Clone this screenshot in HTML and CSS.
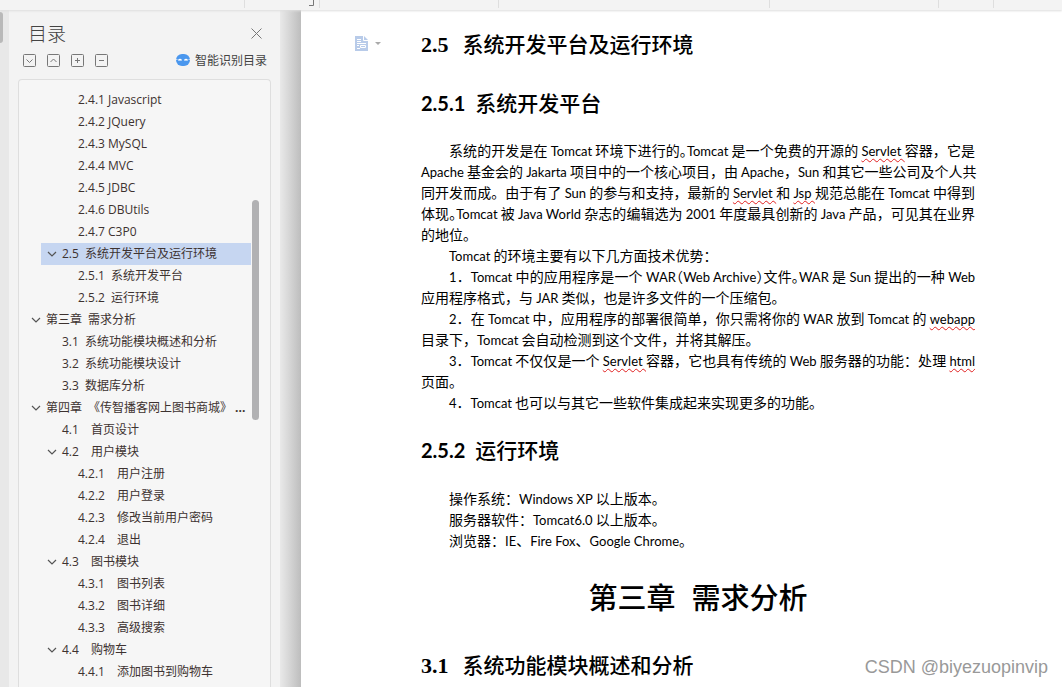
FILE: index.html
```html
<!DOCTYPE html>
<html lang="zh-CN">
<head>
<meta charset="utf-8">
<title>目录</title>
<link rel="stylesheet" href="styles.css">
</head>
<body>
<svg width="0" height="0" class="defs" aria-hidden="true">
  <symbol id="chev" viewBox="0 0 12 12"><path d="M2 4l4 4 4-4" fill="none" stroke="#555" stroke-width="1.2"/></symbol>
</svg>
<div class="app">
  <header class="topbar">
    <i class="t1"></i><i class="t2"></i><i class="t3"></i><i class="t4"></i><i class="t5"></i><i class="t6"></i>
    <svg class="corner" width="6" height="7" viewBox="0 0 6 7" aria-hidden="true"><path d="M0 5.5h4.500V0" fill="none" stroke="#777"/></svg>
  </header>
  <div class="work">
    <div class="rail"><div class="rail-thumb"></div></div>
    <aside class="panel">
      <div class="panel-head">
        <h2>目录</h2>
        <button class="icon" aria-label="关闭"><svg width="11" height="11" viewBox="0 0 11 11"><path d="M.5.5l10 10M10.500.5l-10 10" stroke="#777" fill="none"/></svg></button>
      </div>
      <div class="tools">
        <button class="icon" aria-label="展开"><svg width="13" height="13" viewBox="0 0 13 13"><g fill="none" stroke="#777"><rect x=".5" y=".5" width="12" height="12" rx="1"/><path d="M3.500 5.500l3 3 3-3"/></g></svg></button>
        <button class="icon" aria-label="收起"><svg width="13" height="13" viewBox="0 0 13 13"><g fill="none" stroke="#777"><rect x=".5" y=".5" width="12" height="12" rx="1"/><path d="M3.500 8l3-3 3 3"/></g></svg></button>
        <button class="icon" aria-label="升级"><svg width="13" height="13" viewBox="0 0 13 13"><g fill="none" stroke="#777"><rect x=".5" y=".5" width="12" height="12" rx="1"/><path d="M4 6.500h5M6.500 4v5"/></g></svg></button>
        <button class="icon" aria-label="降级"><svg width="13" height="13" viewBox="0 0 13 13"><g fill="none" stroke="#777"><rect x=".5" y=".5" width="12" height="12" rx="1"/><path d="M4 6.500h5"/></g></svg></button>
        <button class="smart"><svg width="14" height="12" viewBox="0 0 14 12" aria-hidden="true"><rect width="14" height="12" rx="6" fill="#4a97ee"/><path d="M0 5.500h1.500M12.500 5.500H14" stroke="#b9d6f8"/><path d="M2.500 6.500q1.500-2 3 0M8.500 6.500q1.500-2 3 0" fill="none" stroke="#fff" stroke-width="1.300"/></svg>智能识别目录</button>
      </div>
      <nav class="tree">
        <ul>
          <li class="l3"><a href="#">2.4.1 Javascript</a></li>
          <li class="l3"><a href="#">2.4.2 JQuery</a></li>
          <li class="l3"><a href="#">2.4.3 MySQL</a></li>
          <li class="l3"><a href="#">2.4.4 MVC</a></li>
          <li class="l3"><a href="#">2.4.5 JDBC</a></li>
          <li class="l3"><a href="#">2.4.6 DBUtils</a></li>
          <li class="l3"><a href="#">2.4.7 C3P0</a></li>
          <li class="l2 on"><button class="icon" aria-label="折叠"><svg><use href="#chev"/></svg></button><a href="#">2.5<s class="g2"></s>系统开发平台及运行环境</a></li>
          <li class="l3"><a href="#">2.5.1<s class="g2"></s>系统开发平台</a></li>
          <li class="l3"><a href="#">2.5.2<s class="g2"></s>运行环境</a></li>
          <li class="l1"><button class="icon" aria-label="折叠"><svg><use href="#chev"/></svg></button><a href="#">第三章<s class="g2"></s>需求分析</a></li>
          <li class="l2"><a href="#">3.1<s class="g2"></s>系统功能模块概述和分析</a></li>
          <li class="l2"><a href="#">3.2<s class="g2"></s>系统功能模块设计</a></li>
          <li class="l2"><a href="#">3.3<s class="g2"></s>数据库分析</a></li>
          <li class="l1"><button class="icon" aria-label="折叠"><svg><use href="#chev"/></svg></button><a href="#">第四章<s class="g2"></s>《传智播客网上图书商城》<b>...</b></a></li>
          <li class="l2"><a href="#">4.1<s class="g4"></s>首页设计</a></li>
          <li class="l2"><button class="icon" aria-label="折叠"><svg><use href="#chev"/></svg></button><a href="#">4.2<s class="g4"></s>用户模块</a></li>
          <li class="l3"><a href="#">4.2.1<s class="g4"></s>用户注册</a></li>
          <li class="l3"><a href="#">4.2.2<s class="g4"></s>用户登录</a></li>
          <li class="l3"><a href="#">4.2.3<s class="g4"></s>修改当前用户密码</a></li>
          <li class="l3"><a href="#">4.2.4<s class="g4"></s>退出</a></li>
          <li class="l2"><button class="icon" aria-label="折叠"><svg><use href="#chev"/></svg></button><a href="#">4.3<s class="g4"></s>图书模块</a></li>
          <li class="l3"><a href="#">4.3.1<s class="g4"></s>图书列表</a></li>
          <li class="l3"><a href="#">4.3.2<s class="g4"></s>图书详细</a></li>
          <li class="l3"><a href="#">4.3.3<s class="g4"></s>高级搜索</a></li>
          <li class="l2"><button class="icon" aria-label="折叠"><svg><use href="#chev"/></svg></button><a href="#">4.4<s class="g4"></s>购物车</a></li>
          <li class="l3"><a href="#">4.4.1<s class="g4"></s>添加图书到购物车</a></li>
        </ul>
        <div class="thumb"></div>
      </nav>
    </aside>
    <div class="gutter"></div>
    <main class="doc">
      <button class="icon para" aria-label="段落"><svg width="27" height="16" viewBox="0 0 27 16"><path d="M0 0h9l4 4v11H0z" fill="#b8cbe9"/><path d="M8.500 0v4.500H13M2 3.500h4M2 5.500h4M2 7.500h9M2 9.500h2M2 12.500h3M5.500 9.500h5v2h-5z" fill="none" stroke="#fff"/><path d="M20 6h6l-3 3z" fill="#aaa"/></svg></button>
      <article>
        <h3 class="first"><span class="cam">2.5</span><s></s>系统开发平台及运行环境</h3>
        <h3 class="sub"><span>2.5.1</span><s></s>系统开发平台</h3>
        <p><span class="ln in">系统的开发是在 <em>Tomcat</em> 环境下进行的<q>。</q><em>Tomcat</em> 是一个免费的开源的 <em><u>Servlet </u></em>容器，它是</span><span class="ln"><em>Apache</em> 基金会的 <em>Jakarta</em> 项目中的一个核心项目，由 <em>Apache</em>，<em>Sun</em> 和其它一些公司及个人共</span><span class="ln">同开发而成。由于有了 <em>Sun</em> 的参与和支持，最新的 <em><u>Servlet </u></em>和 <em><u>Jsp </u></em>规范总能在 <em>Tomcat</em> 中得到</span><span class="ln">体现<q>。</q><em>Tomcat</em> 被 <em>Java World</em> 杂志的编辑选为 <em>2001</em> 年度最具创新的 <em>Java</em> 产品，可见其在业界</span><span class="end">的地位。</span></p>
        <p><span class="end in"><em>Tomcat</em> 的环境主要有以下几方面技术优势：</span></p>
        <p><span class="ln in"><em>1</em>．<em>Tomcat</em> 中的应用程序是一个 <em>WAR</em><q>（</q><em>Web Archive</em><q>）</q>文件<q>。</q><em>WAR</em> 是 <em>Sun</em> 提出的一种 <em>Web</em></span><span class="end">应用程序格式，与 <em>JAR</em> 类似，也是许多文件的一个压缩包。</span></p>
        <p><span class="ln in"><em>2</em>．在 <em>Tomcat</em> 中，应用程序的部署很简单，你只需将你的 <em>WAR</em> 放到 <em>Tomcat</em> 的 <em><u>webapp</u></em></span><span class="end">目录下，<em>Tomcat</em> 会自动检测到这个文件，并将其解压。</span></p>
        <p><span class="ln in"><em>3</em>．<em>Tomcat</em> 不仅仅是一个 <em><u>Servlet </u></em>容器，它也具有传统的 <em>Web</em> 服务器的功能：处理 <em><u>html</u></em></span><span class="end">页面。</span></p>
        <p><span class="end in"><em>4</em>．<em>Tomcat</em> 也可以与其它一些软件集成起来实现更多的功能。</span></p>
        <h3><span>2.5.2</span><s></s>运行环境</h3>
        <p><span class="end in">操作系统：<em>Windows XP</em> 以上版本。</span><span class="end in">服务器软件：<em>Tomcat6.0</em> 以上版本。</span><span class="end in">浏览器：<em>IE</em>、<em>Fire Fox</em>、<em>Google Chrome</em>。</span></p>
        <h1>第三章<s></s>需求分析</h1>
        <h3 class="last"><span class="cam">3.1</span><s></s>系统功能模块概述和分析</h3>
      </article>
    </main>
  </div>
  <div class="mark">CSDN @biyezuopinvip</div>
</div>
</body>
</html>
```
FILE: styles.css
```css
* { box-sizing: border-box; }
body { margin: 0; background: #fff; color: #000; font-family: "Open Sans", "Noto Sans CJK SC", sans-serif; text-autospace: no-autospace; }
.defs { position: absolute; }
.app { position: relative; display: flex; flex-direction: column; height: 100vh; overflow: hidden; }
.icon { display: flex; padding: 0; border: 0; background: none; }
s { display: inline-block; text-decoration: none; }

.topbar { position: relative; flex: none; height: 10px; background: #f3f3f3; box-shadow: 0 1px 2px #ddd; z-index: 2; }
.topbar i { position: absolute; top: 0; width: 1px; height: 8px; background: #dedede; }
.t1 { left: 244px; } .t2 { left: 319px; } .t3 { left: 498px; } .t4 { left: 769px; } .t5 { left: 938px; } .t6 { left: 993px; }
.corner { position: absolute; left: 309px; top: 0; }

.work { flex: 1; display: flex; min-height: 0; }
.rail { flex: none; width: 9px; padding-top: 2px; background: #e8e8e8; }
.rail-thumb { width: 3px; height: 31px; background: #b9b9b9; border-radius: 0 3px 3px 0; }
.panel { flex: none; width: 271px; padding: 8px 9px 0; background: #f3f3f3; display: flex; flex-direction: column; }
.panel-head { flex: none; display: flex; align-items: center; justify-content: space-between; height: 31px; padding: 0 9px 0 10px; }
.panel-head h2 { margin: 0; color: #444; font-size: 19px; line-height: 32px; font-weight: 300; }
.tools { flex: none; display: flex; align-items: center; gap: 11px; height: 22px; padding: 0 4px 0 5px; margin-bottom: 8px; }
.smart { display: flex; align-items: center; gap: 5px; margin-left: auto; padding: 0; border: 0; background: none; color: #444; font: 12px/20px "Noto Sans CJK SC", sans-serif; }
.tree { position: relative; flex: 1; min-height: 0; overflow: hidden; padding: 9px 19px 0 22px; background: #f6f6f6; border: 1px solid #dedede; border-bottom: 0; border-radius: 4px 4px 0 0; }
.tree ul { margin: 0; padding: 0; list-style: none; }
.tree li { display: flex; align-items: center; height: 22px; white-space: nowrap; }
.tree li.l1 { margin-left: -11px; padding-left: 16px; }
.tree li.l2 { padding-left: 21px; }
.tree li.l3 { padding-left: 37px; }
.tree li .icon { width: 16px; margin-left: -16px; }
.tree li svg { width: 12px; height: 12px; }
.tree li.on { background: #c6d6f1; }
.tree a { color: #3d3230; font-size: 12px; line-height: 22px; text-decoration: none; }
.g2 { width: 6px; } .g4 { width: 12px; }
.tree b { padding-left: 3px; }
.thumb { position: absolute; right: 11px; top: 120px; width: 7px; height: 220px; border-radius: 4px; background: #b1b1b3; }
.gutter { flex: none; width: 21px; background: linear-gradient(90deg, #e9e9e9, #d8d8d8 40%, #bdbdbd); }

.doc { flex: 1; min-width: 0; display: flex; align-items: flex-start; padding-left: 54px; background: #fff; overflow: hidden; }
.para { flex: none; width: 66px; margin-top: 26px; }
article { flex: 1; max-width: 554px; font-family: "Noto Sans CJK SC", sans-serif; }
h3 { margin: 0; padding: 21px 0 23px; font-size: 21px; line-height: 30px; font-weight: 500; }
h3 span { font: bold 20px/30px Lato, sans-serif; }
h3 .cam { font: bold 22px/30px "Liberation Serif", serif; }
h3 s { width: 10px; }
h3 .cam + s { width: 14px; }
h3.first { padding: 18px 0 15px; }
h3.sub { padding: 12px 0 22px; }
h3.last { padding: 33px 0 0; }
h1 { margin: 0; padding-top: 25px; font-size: 29px; line-height: 40px; font-weight: 500; text-align: center; }
h1 s { width: 16px; }
p { margin: 0; font-size: 14px; line-height: 21px; }
p span { display: block; white-space: nowrap; }
.ln { text-align-last: justify; }
.in { padding-left: 28px; }
em { font: 13px/1 Lato, sans-serif; }
q { quotes: none; font-feature-settings: "halt"; }
u { text-decoration: underline wavy #e02020 1px; text-underline-offset: 2px; text-decoration-skip-ink: none; }
.mark { position: absolute; right: 14px; bottom: 8px; color: #999; font: 18px/24px "Liberation Sans", sans-serif; }
```
